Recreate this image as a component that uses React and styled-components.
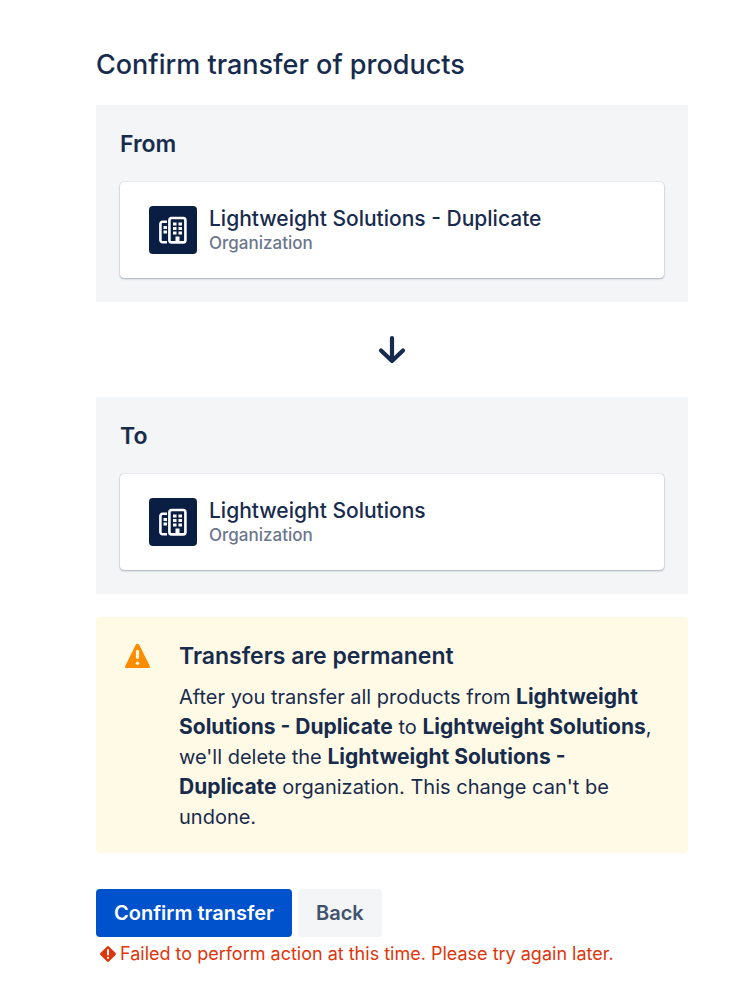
import React from 'react'
import styled, { createGlobalStyle } from 'styled-components';

const organizations = {
  from: "Lightweight Solutions - Duplicate",
  to: "Lightweight Solutions",
};

function OrgLogo() {
  return (
    <Logo viewBox="0 0 48 48" aria-hidden="true">
      <rect width="48" height="48" rx="4" fill="#091e42" />
      <path
        d="M18 15.8H13.6a2.2 2.2 0 0 0-2.2 2.2v16a2.2 2.2 0 0 0 2.2 2.2H18"
        fill="none"
        stroke="#fff"
        strokeWidth="2.6"
      />
      <path d="M14.5 20H18v3h-3.5zM14.5 24.5H18v3h-3.5z" fill="#fff" />
      <rect
        x="20.4"
        y="12"
        width="16"
        height="24.4"
        rx="2.2"
        fill="none"
        stroke="#fff"
        strokeWidth="2.6"
      />
      <path
        d="M24 16.5h3.5v3H24zM29.5 16.5H33v3h-3.5zM24 21h3.5v3H24zM29.5 21H33v3h-3.5zM24 25.5h3.5v3H24zM29.5 25.5H33v3h-3.5z"
        fill="#fff"
      />
      <path d="M26.5 36v-5.5h4V36" fill="#fff" />
    </Logo>
  );
}

function OrgPanel({ id, label, name }) {
  return (
    <Panel aria-labelledby={id}>
      <SectionTitle id={id}>{label}</SectionTitle>
      <Card>
        <OrgLogo />
        <div>
          <OrgName>{name}</OrgName>
          <OrgType>Organization</OrgType>
        </div>
      </Card>
    </Panel>
  );
}

function App() {
  return (
    <Page>
      <GlobalStyle />
      <Title>Confirm transfer of products</Title>
      <OrgPanel id="from" label="From" name={organizations.from} />
      <ArrowBox>
        <svg width="28" height="31" viewBox="0 0 28 31" aria-hidden="true">
          <path
            d="M14 4v23M3 16.5L14 27l11-10.5"
            fill="none"
            stroke="#172b4d"
            strokeWidth="4.2"
            strokeLinecap="round"
            strokeLinejoin="round"
          />
        </svg>
      </ArrowBox>
      <OrgPanel id="to" label="To" name={organizations.to} />
      <Warning>
        <WarningIcon viewBox="0 0 26 26" aria-hidden="true">
          <path
            d="M11.3 2.2a1.9 1.9 0 0 1 3.4 0l10.2 20.6a1.2 1.2 0 0 1-1.100 1.700H2.200a1.200 1.200 0 0 1-1.100-1.700z"
            fill="#ff8b00"
          />
          <path d="M13 8.500v6" stroke="#fffae6" strokeWidth="3" strokeLinecap="round" />
          <circle cx="13" cy="20" r="1.7" fill="#fffae6" />
        </WarningIcon>
        <div>
          <SectionTitle>Transfers are permanent</SectionTitle>
          <WarningText>
            After you transfer all products from <Strong>{organizations.from}</Strong> to{" "}
            <Strong>{organizations.to}</Strong>, we'll delete the{" "}
            <Strong>{organizations.from}</Strong> organization. This change can't be undone.
          </WarningText>
        </div>
      </Warning>
      <Buttons>
        <Button type="button" $primary>Confirm transfer</Button>
        <Button type="button">Back</Button>
      </Buttons>
      <ErrorMessage role="alert">
        <ErrorIcon viewBox="0 0 18 18" aria-hidden="true">
          <rect x="3" y="3" width="12" height="12" rx="1.3" transform="rotate(45 9 9)" fill="#de350b" />
          <path d="M9 5v4.500" stroke="#fff" strokeWidth="2" strokeLinecap="round" />
          <circle cx="9" cy="12.8" r="1.1" fill="#fff" />
        </ErrorIcon>
        Failed to perform action at this time. Please try again later.
      </ErrorMessage>
    </Page>
  );
}

export default App

const GlobalStyle = createGlobalStyle`
  * {
    box-sizing: border-box;
  }
  body {
    margin: 0;
    background: #fff;
    color: #172b4d;
    font-family: Inter, "Liberation Sans", sans-serif;
  }
`;
const Page = styled.main`
  padding: 45px 43px 32px 96px;
`;
const Title = styled.h1`
  margin: 0 0 20px;
  font-size: 27px;
  font-weight: 500;
  line-height: 40px;
`;
const Panel = styled.section`
  padding: 24px;
  background: #f4f5f7;
`;
const SectionTitle = styled.h2`
  margin: 0;
  font-size: 23px;
  font-weight: 600;
  line-height: 30px;
`;
const Card = styled.div`
  display: flex;
  align-items: center;
  gap: 12px;
  margin-top: 23px;
  padding: 24px 29px;
  background: #fff;
  border-radius: 4px;
  box-shadow: 0 1px 2px rgba(9, 30, 66, 0.3), 0 0 1px rgba(9, 30, 66, 0.35);
`;
const Logo = styled.svg`
  flex: none;
  width: 48px;
  height: 48px;
`;
const OrgName = styled.div`
  font-size: 21px;
  font-weight: 500;
  line-height: 26px;
`;
const OrgType = styled.div`
  color: #6b778c;
  font-size: 17px;
  font-weight: 500;
  line-height: 22px;
`;
const ArrowBox = styled.div`
  display: flex;
  justify-content: center;
  padding: 32px 0;
`;
const Warning = styled.section`
  display: flex;
  align-items: flex-start;
  gap: 28px;
  margin-top: 23px;
  padding: 24px 28px 21px;
  background: #fffae6;
  border-radius: 4px;
`;
const WarningIcon = styled.svg`
  flex: none;
  width: 27px;
  height: 30px;
`;
const WarningText = styled.p`
  margin: 11px 0 0;
  font-size: 20px;
  line-height: 30px;
`;
const Strong = styled.strong`
  font-size: 21px;
  font-weight: 700;
  line-height: 1;
`;
const Buttons = styled.div`
  display: flex;
  gap: 6px;
  margin-top: 36px;
`;
const Button = styled.button`
  height: 48px;
  padding: 0 18px;
  border: 0;
  border-radius: 4px;
  background: ${(props) => (props.$primary ? "#0052cc" : "#f4f5f7")};
  color: ${(props) => (props.$primary ? "#fff" : "#42526e")};
  font-family: inherit;
  font-size: 20px;
  font-weight: 600;
  cursor: pointer;
`;
const ErrorMessage = styled.p`
  display: flex;
  align-items: center;
  gap: 3px;
  margin: 5px 0 0;
  padding-left: 3px;
  color: #de350b;
  font-size: 18px;
  line-height: 24px;
`;
const ErrorIcon = styled.svg`
  flex: none;
  width: 18px;
  height: 18px;
`;
